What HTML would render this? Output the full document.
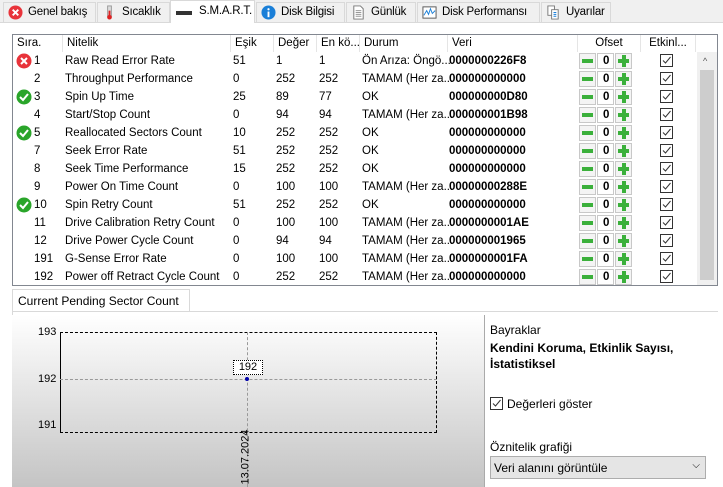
<!DOCTYPE html><html><head><meta charset="utf-8"><style>
*{box-sizing:border-box;margin:0;padding:0}
body{width:723px;height:487px;background:#fff;font-family:"Liberation Sans",sans-serif;font-size:11.5px;color:#000;position:relative;overflow:hidden}
.a{position:absolute;white-space:nowrap}
.tabs{position:absolute;left:0;top:0;width:723px;height:23px;background:#f0f0f0;border-bottom:1px solid #d9d9d9}
.tab{position:absolute;top:2px;height:20px;border:1px solid #d9d9d9;border-bottom:none;background:#f0f0f0;padding:3px 0 0 24px;font-size:11.5px;white-space:nowrap;letter-spacing:-0.2px;overflow:hidden}
.ic{position:absolute;left:4px;top:2px;width:15px;height:15px}
.tbl{position:absolute;left:12px;top:34px;width:706px;height:252px;border:1px solid #828790;overflow:hidden}
.hd{position:absolute;top:0;height:17px;border-right:1px solid #e5e5e5;padding:2px 4px;font-size:11.5px;white-space:nowrap;overflow:hidden}
.row{position:absolute;left:0;width:684px;height:18px;font-size:11.5px}
.row span{position:absolute;top:3px;white-space:nowrap}
.b{font-weight:bold}
.btn{position:absolute;top:1px;width:17px;height:16px;border:1px solid #c8c8c8;background:#f4f4f4}
.chk{position:absolute;left:647px;top:2px;width:13px;height:13px;border:1px solid #333;background:#fff}
</style></head><body>
<div class="tabs">
<div class="tab" style="left:3px;width:93px"><svg class="ic" viewBox="0 0 16 16"><circle cx="8" cy="8" r="7.5" fill="#e8333a"/><path d="M5 5l6 6M11 5l-6 6" stroke="#fff" stroke-width="2"/></svg>Genel bakış</div>
<div class="tab" style="left:97px;width:73px"><svg class="ic" viewBox="0 0 16 16"><rect x="6" y="1" width="4" height="11" fill="#ddd" stroke="#999"/><rect x="7" y="6" width="2" height="6" fill="#d22"/><circle cx="8" cy="13" r="2.5" fill="#d22"/></svg>Sıcaklık</div>
<div class="tab" style="left:170px;top:0;height:23px;width:85px;background:#fff;padding-top:4px;padding-left:28px">S.M.A.R.T.<div class="a" style="left:5px;top:10px;width:16px;height:4px;background:#333"></div></div>
<div class="tab" style="left:256px;width:89px"><svg class="ic" viewBox="0 0 16 16"><circle cx="8" cy="8" r="7.5" fill="#1a7fd8"/><rect x="7" y="7" width="2" height="6" fill="#fff"/><circle cx="8" cy="4.5" r="1.2" fill="#fff"/></svg>Disk Bilgisi</div>
<div class="tab" style="left:346px;width:70px"><svg class="ic" viewBox="0 0 16 16"><path d="M3 1h7l3 3v11H3z" fill="#fff" stroke="#777"/><path d="M5 6h6M5 8h6M5 10h6M5 12h6" stroke="#999"/></svg>Günlük</div>
<div class="tab" style="left:417px;width:123px"><svg class="ic" viewBox="0 0 16 16"><rect x="1" y="2" width="14" height="12" fill="#fff" stroke="#555"/><path d="M2 11l3-5 2 4 2-6 2 5 3-3" stroke="#1a7fd8" fill="none"/></svg>Disk Performansı</div>
<div class="tab" style="left:541px;width:70px"><svg class="ic" viewBox="0 0 16 16"><path d="M2 1h7v10H2z" fill="#fff" stroke="#777"/><path d="M6 5h7v10H6z" fill="#fff" stroke="#777"/><path d="M8 8h3M8 10h3M8 12h3" stroke="#1a7fd8"/></svg>Uyarılar</div>
</div>
<div class="tbl">
<div class="hd" style="left:0;width:50px">Sıra.</div>
<div class="hd" style="left:50px;width:168px">Nitelik</div>
<div class="hd" style="left:218px;width:43px">Eşik</div>
<div class="hd" style="left:261px;width:43px">Değer</div>
<div class="hd" style="left:304px;width:43px">En kö...</div>
<div class="hd" style="left:347px;width:88px">Durum</div>
<div class="hd" style="left:435px;width:130px">Veri</div>
<div class="hd" style="left:565px;width:63px;text-align:center">Ofset</div>
<div class="hd" style="left:628px;width:55px;text-align:center">Etkinl...</div>
<div class="a" style="left:684px;top:17px;width:20px;height:235px;background:#f0f0f0"><div class="a" style="left:6px;top:4px;font-size:9px;color:#555">^</div><div class="a" style="left:3px;top:18px;width:14px;height:210px;background:#cdcdcd"></div></div>
<div id="rows"></div>
</div>
<script>
var d=[["x","1","Raw Read Error Rate","51","1","1","Ön Arıza: Öngö...","0000000226F8"],
["","2","Throughput Performance","0","252","252","TAMAM (Her za...","000000000000"],
["v","3","Spin Up Time","25","89","77","OK","000000000D80"],
["","4","Start/Stop Count","0","94","94","TAMAM (Her za...","000000001B98"],
["v","5","Reallocated Sectors Count","10","252","252","OK","000000000000"],
["","7","Seek Error Rate","51","252","252","OK","000000000000"],
["","8","Seek Time Performance","15","252","252","OK","000000000000"],
["","9","Power On Time Count","0","100","100","TAMAM (Her za...","00000000288E"],
["v","10","Spin Retry Count","51","252","252","OK","000000000000"],
["","11","Drive Calibration Retry Count","0","100","100","TAMAM (Her za...","0000000001AE"],
["","12","Drive Power Cycle Count","0","94","94","TAMAM (Her za...","000000001965"],
["","191","G-Sense Error Rate","0","100","100","TAMAM (Her za...","0000000001FA"],
["","192","Power off Retract Cycle Count","0","252","252","TAMAM (Her za...","000000000000"]];
var h="";
d.forEach(function(r,i){var t=17+i*18;h+='<div class="row" style="top:'+t+'px">';
if(r[0]=="x")h+='<svg class="a" style="left:3px;top:1px" width="16" height="16" viewBox="0 0 16 16"><circle cx="8" cy="8" r="7.5" fill="#e8333a"/><path d="M5 5l6 6M11 5l-6 6" stroke="#fff" stroke-width="2"/></svg>';
if(r[0]=="v")h+='<svg class="a" style="left:3px;top:1px" width="16" height="16" viewBox="0 0 16 16"><circle cx="8" cy="8" r="7.5" fill="#2aa52a"/><path d="M4 8l3 3 5-6" stroke="#fff" stroke-width="2" fill="none"/></svg>';
h+='<span style="left:21px">'+r[1]+'</span><span style="left:52px">'+r[2]+'</span><span style="left:220px">'+r[3]+'</span><span style="left:263px">'+r[4]+'</span><span style="left:306px">'+r[5]+'</span><span style="left:349px">'+r[6]+'</span><span class="b" style="left:436px">'+r[7]+'</span>';
h+='<div class="btn" style="left:566px"><div class="a" style="left:2px;top:5px;width:11px;height:4px;background:#3bb03b"></div></div><div class="btn" style="left:584px;background:#fff"><span class="b" style="left:5px;top:1px">0</span></div><div class="btn" style="left:602px"><div class="a" style="left:2px;top:5px;width:11px;height:4px;background:#3bb03b"></div><div class="a" style="left:5.5px;top:1px;width:4px;height:12px;background:#3bb03b"></div></div>';
h+='<div class="chk"><svg width="11" height="11" viewBox="0 0 11 11" style="position:absolute;left:0;top:0"><path d="M2 5.5l2.5 2.5 5-6" stroke="#333" fill="none"/></svg></div></div>';});
document.getElementById("rows").innerHTML=h;
</script>
<div class="a" style="left:0;top:287px;width:723px;height:200px;background:#fff"></div>
<div class="a" style="left:12px;top:289px;width:178px;height:23px;border:1px solid #d9d9d9;border-bottom:none;background:#fff;padding:4px 5px;font-size:12px">Current Pending Sector Count</div>
<div class="a" style="left:12px;top:311px;width:706px;height:176px;border-top:1px solid #d9d9d9;border-left:1px solid #d9d9d9"></div>
<div class="a" style="left:12px;top:315px;width:473px;height:172px;background:linear-gradient(#fff,#c4c4c4);border-right:1px solid #aaa"></div>
<div class="a" style="left:60px;top:332px;width:377px;height:101px;border:1px dashed #000;border-left:1px solid #000"></div>
<div class="a" style="left:60px;top:379px;width:377px;border-top:1px dashed #999"></div>
<div class="a" style="left:247px;top:332px;height:155px;border-left:1px dashed #999"></div>
<div class="a" style="left:38px;top:326px;font-size:11px">193</div>
<div class="a" style="left:38px;top:373px;font-size:11px">192</div>
<div class="a" style="left:38px;top:419px;font-size:11px">191</div>
<div class="a" style="left:233px;top:360px;width:30px;height:15px;border:1px dotted #000;background:#fff;font-size:11px;text-align:center">192</div>
<div class="a" style="left:245px;top:377px;width:4px;height:4px;background:#00a;border-radius:2px"></div>
<div class="a" style="left:218px;top:451px;font-size:11px;transform:rotate(-90deg);transform-origin:center">13.07.2024</div>
<div class="a" style="left:490px;top:323px;font-size:12px">Bayraklar</div>
<div class="a b" style="left:490px;top:340px;font-size:12px;line-height:16px">Kendini Koruma, Etkinlik Sayısı,<br>İstatistiksel</div>
<div class="a" style="left:490px;top:397px;width:13px;height:13px;border:1px solid #333"><svg width="11" height="11" viewBox="0 0 11 11" style="position:absolute"><path d="M2 5.5l2.5 2.5 5-6" stroke="#333" fill="none"/></svg></div>
<div class="a" style="left:507px;top:397px;font-size:12px">Değerleri göster</div>
<div class="a" style="left:490px;top:440px;font-size:12px">Öznitelik grafiği</div>
<div class="a" style="left:490px;top:456px;width:216px;height:23px;border:1px solid #adadad;background:#e5e5e5;padding:4px 3px;font-size:12px">Veri alanını görüntüle<span class="a" style="right:5px;top:3px;font-size:10px">⌵</span></div>
</body></html>
